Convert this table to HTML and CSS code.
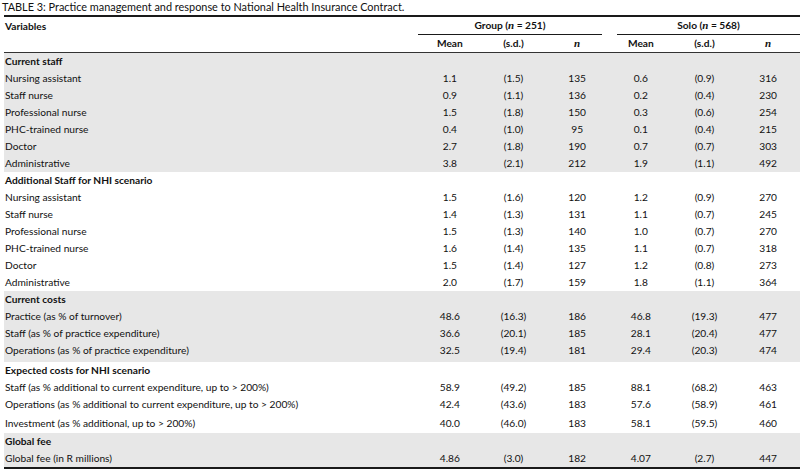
FILE: index.html
```html
<!DOCTYPE html>
<html>
<head>
<meta charset="utf-8">
<link rel="stylesheet" href="styles.css">
</head>
<body>
<div class="caption">TABLE 3: Practice management and response to National Health Insurance Contract.</div>
<table class="tbl">
  <colgroup>
    <col class="c-var">
    <col class="c-num"><col class="c-num"><col class="c-num">
    <col class="c-num"><col class="c-num"><col class="c-num">
  </colgroup>
  <thead>
    <tr class="h1">
      <th class="lab">Variables</th>
      <th colspan="3" class="grp"><div class="grp-in grp-left">Group (<i class="ni">n</i> = 251)</div></th>
      <th colspan="3" class="grp"><div class="grp-in grp-right">Solo (<i class="ni">n</i> = 568)</div></th>
    </tr>
    <tr class="h2">
      <th></th>
      <th>Mean</th><th>(s.d.)</th><th><i class="ni">n</i></th>
      <th>Mean</th><th>(s.d.)</th><th><i class="ni">n</i></th>
    </tr>
  </thead>
  <tbody class="shade">
    <tr class="sec"><td>Current staff</td><td></td><td></td><td></td><td></td><td></td><td></td></tr>
    <tr><td>Nursing assistant</td><td>1.1</td><td>(1.5)</td><td>135</td><td>0.6</td><td>(0.9)</td><td>316</td></tr>
    <tr><td>Staff nurse</td><td>0.9</td><td>(1.1)</td><td>136</td><td>0.2</td><td>(0.4)</td><td>230</td></tr>
    <tr><td>Professional nurse</td><td>1.5</td><td>(1.8)</td><td>150</td><td>0.3</td><td>(0.6)</td><td>254</td></tr>
    <tr><td>PHC-trained nurse</td><td>0.4</td><td>(1.0)</td><td>95</td><td>0.1</td><td>(0.4)</td><td>215</td></tr>
    <tr><td>Doctor</td><td>2.7</td><td>(1.8)</td><td>190</td><td>0.7</td><td>(0.7)</td><td>303</td></tr>
    <tr><td>Administrative</td><td>3.8</td><td>(2.1)</td><td>212</td><td>1.9</td><td>(1.1)</td><td>492</td></tr>
  </tbody>
  <tbody>
    <tr class="sec"><td>Additional Staff for NHI scenario</td><td></td><td></td><td></td><td></td><td></td><td></td></tr>
    <tr><td>Nursing assistant</td><td>1.5</td><td>(1.6)</td><td>120</td><td>1.2</td><td>(0.9)</td><td>270</td></tr>
    <tr><td>Staff nurse</td><td>1.4</td><td>(1.3)</td><td>131</td><td>1.1</td><td>(0.7)</td><td>245</td></tr>
    <tr><td>Professional nurse</td><td>1.5</td><td>(1.3)</td><td>140</td><td>1.0</td><td>(0.7)</td><td>270</td></tr>
    <tr><td>PHC-trained nurse</td><td>1.6</td><td>(1.4)</td><td>135</td><td>1.1</td><td>(0.7)</td><td>318</td></tr>
    <tr><td>Doctor</td><td>1.5</td><td>(1.4)</td><td>127</td><td>1.2</td><td>(0.8)</td><td>273</td></tr>
    <tr><td>Administrative</td><td>2.0</td><td>(1.7)</td><td>159</td><td>1.8</td><td>(1.1)</td><td>364</td></tr>
  </tbody>
  <tbody class="shade">
    <tr class="sec"><td>Current costs</td><td></td><td></td><td></td><td></td><td></td><td></td></tr>
    <tr><td>Practice (as % of turnover)</td><td>48.6</td><td>(16.3)</td><td>186</td><td>46.8</td><td>(19.3)</td><td>477</td></tr>
    <tr><td>Staff (as % of practice expenditure)</td><td>36.6</td><td>(20.1)</td><td>185</td><td>28.1</td><td>(20.4)</td><td>477</td></tr>
    <tr class="tall-top"><td>Operations (as % of practice expenditure)</td><td>32.5</td><td>(19.4)</td><td>181</td><td>29.4</td><td>(20.3)</td><td>474</td></tr>
  </tbody>
  <tbody>
    <tr class="sec"><td>Expected costs for NHI scenario</td><td></td><td></td><td></td><td></td><td></td><td></td></tr>
    <tr><td>Staff (as % additional to current expenditure, up to &gt; 200%)</td><td>58.9</td><td>(49.2)</td><td>185</td><td>88.1</td><td>(68.2)</td><td>463</td></tr>
    <tr><td>Operations (as % additional to current expenditure, up to &gt; 200%)</td><td>42.4</td><td>(43.6)</td><td>183</td><td>57.6</td><td>(58.9)</td><td>461</td></tr>
    <tr class="tall"><td>Investment (as % additional, up to &gt; 200%)</td><td>40.0</td><td>(46.0)</td><td>183</td><td>58.1</td><td>(59.5)</td><td>460</td></tr>
  </tbody>
  <tbody class="shade">
    <tr class="sec"><td>Global fee</td><td></td><td></td><td></td><td></td><td></td><td></td></tr>
    <tr><td>Global fee (in R millions)</td><td>4.86</td><td>(3.0)</td><td>182</td><td>4.07</td><td>(2.7)</td><td>447</td></tr>
  </tbody>
</table>
</body>
</html>
```
FILE: styles.css
```css
html, body {
  margin: 0;
  padding: 0;
  background: #ffffff;
}
body {
  font-family: Lato, "Open Sans", "Liberation Sans", sans-serif;
  color: #111111;
}
.caption {
  font-size: 10.9px;
  line-height: 14px;
  height: 15px;
  padding-left: 2px;
  white-space: nowrap;
}
.tbl {
  margin-left: 4px;
  width: 796px;
  border-collapse: collapse;
  table-layout: fixed;
  border-top: 2px solid #1a1a1a;
  border-bottom: 2px solid #1a1a1a;
  font-size: 10.2px;
}
.c-var { width: 414px; }
.c-num { width: 63.66px; }
th, td {
  padding: 0;
  height: 17px;
  line-height: 17px;
  white-space: nowrap;
  text-align: center;
  font-weight: normal;
}
th { font-weight: bold; }
td:first-child, th.lab {
  text-align: left;
  padding-left: 1px;
}
.h1 th { height: 18px; vertical-align: top; }
.h1 th.lab { line-height: 18px; }
.grp-in {
  line-height: 17px;
  border-bottom: 1px solid #1a1a1a;
}
.grp-left { margin-right: 7px; }
.grp-right { margin-left: 8px; }
.h2 th { border-bottom: 1px solid #333333; }
.ni {
  font-family: "Liberation Serif", "DejaVu Serif", serif;
  font-style: italic;
  font-weight: bold;
  font-size: 11px;
}
.shade td { background: #e7e7e7; }
.sec td { font-weight: bold; }
.tall-top td { height: 20px; line-height: 17px; vertical-align: top; }
.tall td { height: 20px; line-height: 20px; }
```
